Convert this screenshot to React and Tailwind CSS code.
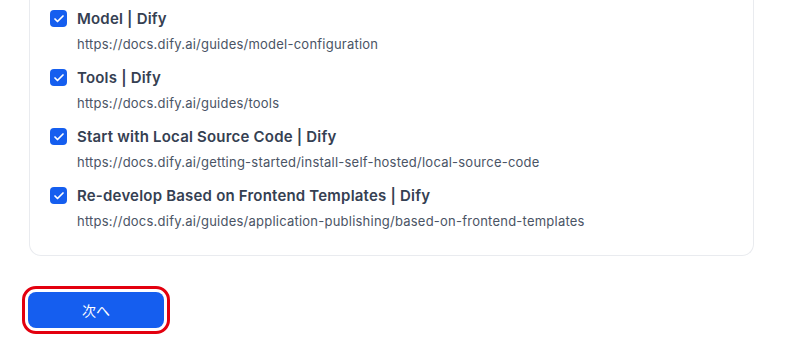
import { Check } from 'lucide-react';

const pages = [
  { title: 'Model | Dify', url: 'https://docs.dify.ai/guides/model-configuration' },
  { title: 'Tools | Dify', url: 'https://docs.dify.ai/guides/tools' },
  { title: 'Start with Local Source Code | Dify', url: 'https://docs.dify.ai/getting-started/install-self-hosted/local-source-code' },
  { title: 'Re-develop Based on Frontend Templates | Dify', url: 'https://docs.dify.ai/guides/application-publishing/based-on-frontend-templates' },
];

export default function App() {
  return (
    <div
      className="w-[800px] h-[348px] bg-white overflow-hidden"
      style={{ fontFamily: 'Inter, "Noto Sans CJK JP", sans-serif' }}
    >
      <div className="ml-[29px] w-[725px] border-x border-b border-[#e9ebef] rounded-b-xl pl-5 pt-[9px] pb-[25px] flex flex-col gap-[15px]">
        {pages.map((p) => (
          <div key={p.url} className="flex gap-[10px]">
            <div className="mt-px w-[17px] h-[17px] rounded-[4px] bg-[#155eef] flex items-center justify-center shrink-0">
              <Check size={12} strokeWidth={3.5} className="text-white" />
            </div>
            <div className="flex flex-col">
              <div className="text-[15px] leading-5 font-semibold tracking-[0.2px] text-[#354052]">{p.title}</div>
              <div className="mt-1.5 text-[13px] leading-[18px] tracking-[0.23px] text-[#4a5465]">{p.url}</div>
            </div>
          </div>
        ))}
      </div>

      <button className="ml-[28px] mt-[36px] w-[136px] h-9 rounded-lg bg-[#155eef] text-white text-[14px] font-normal outline-[3px] outline-solid outline-[#e3000f] outline-offset-[3px]">
        次へ
      </button>
    </div>
  );
}
